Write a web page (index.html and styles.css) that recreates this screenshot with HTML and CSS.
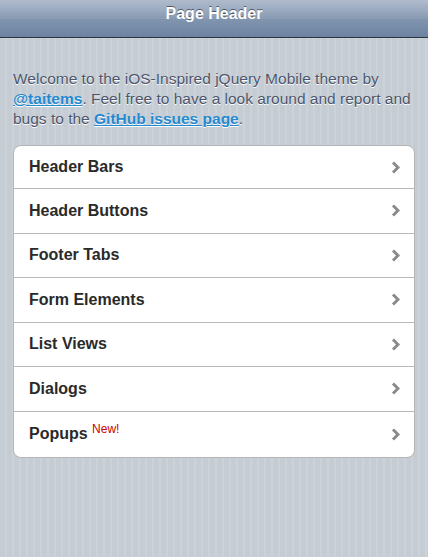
FILE: index.html
```html
<!DOCTYPE html>
<html>
<head>
<meta charset="utf-8">
<link rel="stylesheet" href="styles.css">
</head>
<body>
<div class="page">
  <header class="bar"><h1 class="title">Page Header</h1></header>
  <main class="content">
    <p class="intro">Welcome to the iOS-Inspired jQuery Mobile theme by <a href="#">@taitems</a>. Feel free to have a look around and report and bugs to the <a href="#">GitHub issues page</a>.</p>
    <ul class="list">
      <li class="item"><span class="label">Header Bars</span><svg class="chev" width="9" height="13" viewBox="0 0 9 13"><polyline points="2,1.5 7,6.5 2,11.5" fill="none" stroke="#8a8a8a" stroke-width="3"/></svg></li>
      <li class="item"><span class="label">Header Buttons</span><svg class="chev" width="9" height="13" viewBox="0 0 9 13"><polyline points="2,1.5 7,6.5 2,11.5" fill="none" stroke="#8a8a8a" stroke-width="3"/></svg></li>
      <li class="item"><span class="label">Footer Tabs</span><svg class="chev" width="9" height="13" viewBox="0 0 9 13"><polyline points="2,1.5 7,6.5 2,11.5" fill="none" stroke="#8a8a8a" stroke-width="3"/></svg></li>
      <li class="item"><span class="label">Form Elements</span><svg class="chev" width="9" height="13" viewBox="0 0 9 13"><polyline points="2,1.5 7,6.5 2,11.5" fill="none" stroke="#8a8a8a" stroke-width="3"/></svg></li>
      <li class="item"><span class="label">List Views</span><svg class="chev" width="9" height="13" viewBox="0 0 9 13"><polyline points="2,1.5 7,6.5 2,11.5" fill="none" stroke="#8a8a8a" stroke-width="3"/></svg></li>
      <li class="item"><span class="label">Dialogs</span><svg class="chev" width="9" height="13" viewBox="0 0 9 13"><polyline points="2,1.5 7,6.5 2,11.5" fill="none" stroke="#8a8a8a" stroke-width="3"/></svg></li>
      <li class="item"><span class="label">Popups <sup class="new">New!</sup></span><svg class="chev" width="9" height="13" viewBox="0 0 9 13"><polyline points="2,1.5 7,6.5 2,11.5" fill="none" stroke="#8a8a8a" stroke-width="3"/></svg></li>
    </ul>
  </main>
</div>
</body>
</html>
```

FILE: styles.css
```css
html, body {
  margin: 0;
  padding: 0;
  height: 100%;
}
body {
  font-family: "Liberation Sans", Arial, sans-serif;
  background-color: #c5ccd4;
  background-image: repeating-linear-gradient(90deg, #c5ccd4 0, #c5ccd4 5px, #cbd2d8 5px, #cbd2d8 7px);
}
.page {
  min-height: 100%;
}
.bar {
  height: 37px;
  border-bottom: 1px solid #2d3642;
  background: linear-gradient(#b0bccd 0%, #889bb3 50%, #8195af 51%, #6d83a1 100%);
  display: flex;
  align-items: center;
  justify-content: center;
}
.title {
  margin: 0 0 9px;
  font-size: 16px;
  font-weight: bold;
  color: #fff;
  text-shadow: 0 -1px 0 rgba(0, 0, 0, 0.5);
}
.content {
  padding: 31px 13px 13px;
}
.intro {
  margin: 0;
  font-size: 15.5px;
  line-height: 20px;
  color: #4c566c;
  text-shadow: 0 1px 0 #fff;
}
.intro a {
  color: #2489ce;
  font-weight: bold;
}
.list {
  list-style: none;
  margin: 16px 0 0;
  padding: 0;
  background: #fff;
  border: 1px solid #b5b5b5;
  border-radius: 8px;
  overflow: hidden;
}
.item {
  height: 43.5px;
  display: flex;
  align-items: center;
  justify-content: space-between;
  padding: 0 14px 0 15px;
  border-top: 1px solid #b9b9b9;
}
.item:first-child {
  border-top: 0;
  height: 42px;
}
.item:last-child {
  height: 45.5px;
}
.label {
  font-size: 16px;
  font-weight: bold;
  color: #2a2a2a;
}
.new {
  font-size: 12px;
  font-weight: normal;
  color: #cc0000;
  vertical-align: 6px;
  line-height: 0;
}
.chev {
  display: block;
}
```
